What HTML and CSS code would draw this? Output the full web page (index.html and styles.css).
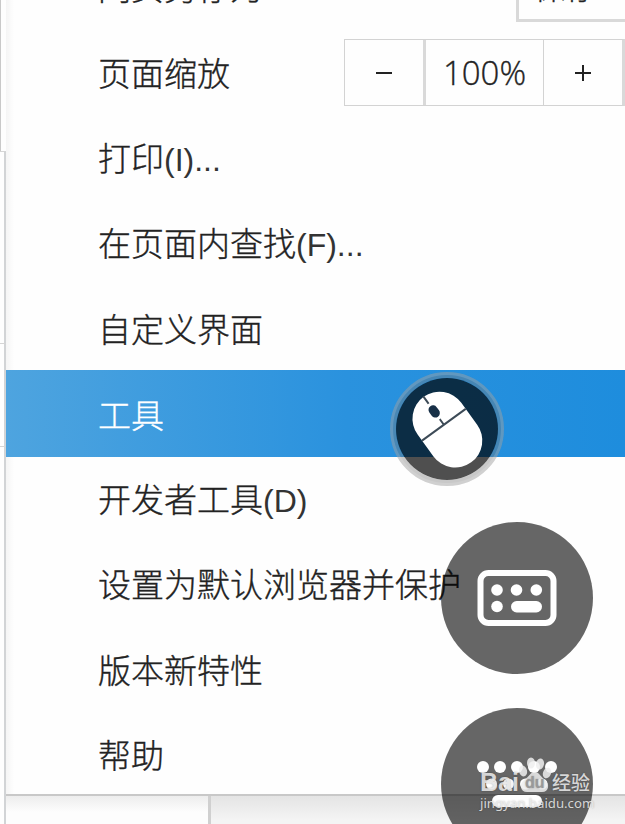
FILE: index.html
```
<!DOCTYPE html>
<html lang="zh-CN">
<head>
  <meta charset="UTF-8">
  <title>工具</title>
  <link rel="stylesheet" href="styles.css">
</head>
<body>

<div class="screen">
  <!-- strip of the window left of the menu -->
  <div class="edge">
    <div class="edge-top"></div>
    <div class="edge-row"></div>
    <div class="edge-row short"></div>
    <div class="edge-row last"></div>
  </div>

  <div class="main">
    <ul class="menu">
      <li class="item first">
        <span>网页另存为</span>
        <button class="save-btn">保存...</button>
      </li>
      <li class="item">
        <span>页面缩放</span>
        <div class="zoom">
          <button class="minus"><svg width="18" height="18" viewBox="0 0 18 18"><path d="M1 9H17" /></svg></button>
          <div class="value">100%</div>
          <button class="plus"><svg width="18" height="18" viewBox="0 0 18 18"><path d="M1 9H17M9 1V17" /></svg></button>
        </div>
      </li>
      <li class="item"><span>打印<span class="key">(I)...</span></span></li>
      <li class="item"><span>在页面内查找<span class="key">(F)...</span></span></li>
      <li class="item"><span>自定义界面</span></li>
      <li class="item active"><span>工具</span></li>
      <li class="item"><span>开发者工具<span class="key">(D)</span></span></li>
      <li class="item"><span>设置为默认浏览器并保护</span></li>
      <li class="item"><span>版本新特性</span></li>
      <li class="item"><span>帮助</span></li>
    </ul>
    <div class="bottom">
      <div class="cell"></div>
      <div class="cell grey"></div>
    </div>
  </div>
</div>

<!-- Floating buttons -->
<svg class="float mouse" viewBox="0 0 116 116">
  <circle cx="58" cy="58" r="54" fill="none" stroke="#777" stroke-opacity=".4" stroke-width="6" />
  <circle cx="58" cy="58" r="55.5" fill="none" stroke="#fff" stroke-opacity=".15" stroke-width="3" />
  <circle cx="58" cy="58" r="51" fill="#000" fill-opacity=".69" />
  <g transform="translate(58.4 58.6) rotate(-36)">
    <rect x="-27" y="-40.5" width="54" height="81" rx="27" fill="#fff" />
    <path d="M-27 -6H27M0 -41V-6" stroke="#3d4b57" stroke-width="2" fill="none" />
    <rect x="-6.5" y="-32" width="13" height="19" rx="6" fill="#fff" />
    <rect x="-4.5" y="-29" width="9" height="13" rx="4.5" fill="#173047" />
  </g>
</svg>

<svg class="float keyboard" viewBox="0 0 152 152">
  <circle cx="76" cy="76" r="76" fill="#000" fill-opacity=".6" />
  <rect x="39.5" y="51" width="73" height="50" rx="8" fill="none" stroke="#fff" stroke-width="6" />
  <g fill="#fff">
    <circle cx="56" cy="68" r="5.8" />
    <circle cx="75.5" cy="68" r="5.8" />
    <circle cx="95.3" cy="68" r="5.8" />
    <circle cx="56" cy="84.5" r="5.8" />
    <rect x="70" y="79" width="31" height="11.5" rx="5.7" />
  </g>
</svg>

<svg class="float keyboard-two" viewBox="0 0 152 116">
  <circle cx="76" cy="76" r="76" fill="#000" fill-opacity=".6" />
  <g fill="#fff">
    <circle cx="42" cy="59" r="6" />
    <circle cx="59" cy="59" r="6" />
    <circle cx="76" cy="59" r="6" />
    <circle cx="93" cy="59" r="6" />
    <circle cx="110" cy="59" r="6" />
    <circle cx="50.5" cy="76" r="5.5" />
    <circle cx="67.5" cy="76" r="5.5" />
    <circle cx="84.5" cy="76" r="5.5" />
    <circle cx="101" cy="76" r="5.5" />
    <rect x="51" y="87" width="50" height="12" rx="6" />
  </g>
</svg>

<div class="watermark">
  <div class="brand">
    <span class="bai">Bai</span>
    <span class="paw">
      <svg width="34" height="36" viewBox="0 0 34 36">
        <ellipse cx="5" cy="14" rx="4" ry="5.5" transform="rotate(-15 5 14)" />
        <ellipse cx="13" cy="6" rx="4" ry="5.5" />
        <ellipse cx="22" cy="7" rx="4" ry="5.5" transform="rotate(12 22 7)" />
        <ellipse cx="29" cy="16" rx="4" ry="5.5" transform="rotate(20 29 16)" />
        <path d="M17 15C21 15 23 20 27 23C32 27 31 35 24 35H9C2 35 1 27 6 23C11 20 12 15 17 15Z" />
      </svg>
      <b>du</b>
    </span>
    <span class="jingyan">经验</span>
  </div>
  <div class="url">jingyan.baidu.com</div>
</div>

</body>
</html>
```

FILE: styles.css
```
body {
  margin: 0;
  height: 824px;
  position: relative;
  overflow: hidden;
  background: #fefefe;
  color: #222;
  font-family: "Open Sans", "Noto Sans CJK SC", sans-serif;
  font-weight: 300;
}

.screen {
  display: flex;
  height: 824px;
  overflow: hidden;
}

.edge {
  width: 6px;
  flex-shrink: 0;
}

.edge-top {
  height: 151px;
  box-sizing: border-box;
  border-left: 1px solid #c9c9c9;
}

.edge-row {
  height: 192px;
  box-sizing: border-box;
  border-top: 1px solid #d5d5d5;
  border-right: 2px solid #d2d4d6;
}

.edge-row.short {
  height: 103px;
}

.edge-row.last {
  height: 378px;
}

.main {
  flex: 1;
  min-width: 0;
  display: flex;
  flex-direction: column;
}

.menu {
  list-style: none;
  margin: -56px 0 0;
  padding: 0;
  height: 850px;
  flex-shrink: 0;
  background: linear-gradient(to right, #f5f5f5, #fefefe 8px);
}

.item {
  height: 85.25px;
  box-sizing: border-box;
  padding-top: 4px;
  padding-left: 92px;
  display: flex;
  align-items: center;
  justify-content: space-between;
  font-size: 33px;
  line-height: 48px;
  white-space: nowrap;
  -webkit-text-stroke: 0.35px;
}

.item.first {
  padding-top: 2px;
}

.key {
  color: #333;
  font-family: "Liberation Sans", sans-serif;
  font-size: 32px;
  -webkit-text-stroke: 0;
}

.item.active {
  height: 86.5px;
  margin-bottom: -1.25px;
  color: #fff;
  background: linear-gradient(to right, #4ea4df, #2a92de 55%, #1e8ddd);
}

button {
  padding: 0;
  background: #fefefe;
  color: #222;
  font: inherit;
}

.save-btn {
  width: 120px;
  height: 69px;
  box-sizing: border-box;
  margin-right: -11px;
  padding-bottom: 2px;
  border: 3px solid #d9d9d9;
  font-size: 31px;
}

.zoom {
  display: flex;
  width: 281px;
  height: 67px;
  box-sizing: border-box;
  margin-top: -2px;
  border: 1px solid #d3d3d3;
  border-right: 3px solid #d9d9d9;
}

.zoom button {
  width: 78px;
  border: none;
  display: flex;
  align-items: center;
  justify-content: center;
}

.zoom svg {
  fill: none;
  stroke: #222;
  stroke-width: 2;
}

.zoom .value {
  flex: 1;
  border-left: 3px solid #d9d9d9;
  border-right: 1px solid #d3d3d3;
  display: flex;
  align-items: center;
  justify-content: center;
}

.bottom {
  flex: 1;
  display: flex;
  border-top: 2px solid #c8c8c8;
}

.cell {
  width: 202px;
  border-right: 3px solid #d0d0d0;
  background: linear-gradient(#ededed, #fdfdfd 16px);
}

.cell.grey {
  flex: 1;
  border-right: none;
  background: linear-gradient(#e4e4e4, #f4f4f4 24px);
}

/* Floating buttons */
.float {
  position: absolute;
}

.mouse {
  left: 389px;
  top: 371px;
  width: 116px;
  height: 116px;
}

.keyboard {
  left: 441px;
  top: 522px;
  width: 152px;
  height: 152px;
}

.keyboard-two {
  left: 441px;
  top: 708px;
  width: 152px;
  height: 116px;
}

.watermark {
  position: absolute;
  left: 480px;
  top: 757px;
  color: rgba(240, 240, 240, 0.85);
  font-family: "Noto Sans", "Noto Sans CJK SC", sans-serif;
  text-shadow: 0 0 2px rgba(0, 0, 0, 0.3);
}

.brand {
  display: flex;
  align-items: flex-end;
  height: 36px;
}

.bai {
  width: 38px;
  font: bold 25px/22px "Liberation Sans", sans-serif;
}

.paw {
  position: relative;
  width: 34px;
  height: 36px;
}

.paw svg {
  fill: #eee;
  fill-opacity: 0.85;
}

.paw b {
  position: absolute;
  left: 7px;
  bottom: 1px;
  font: bold 16px/18px "Liberation Sans", sans-serif;
  color: #999;
}

.jingyan {
  font-size: 19px;
  line-height: 20px;
  font-weight: 500;
}

.url {
  font-size: 13.2px;
  line-height: 16px;
  font-weight: 400;
  margin-top: 2px;
}
```
